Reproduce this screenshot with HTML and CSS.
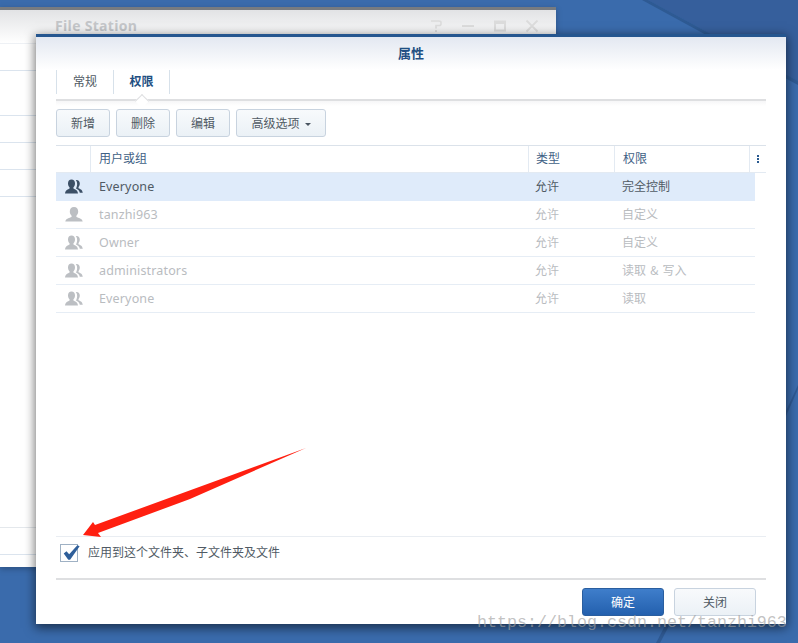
FILE: index.html
```html
<!DOCTYPE html>
<html lang="zh">
<head>
<meta charset="utf-8">
<title>属性</title>
<link rel="stylesheet" href="styles.css">
</head>
<body>
<div class="desktop">
  <svg class="wallpaper" width="798" height="643" viewBox="0 0 798 643">
    <path d="M648 0 L798 81 L798 0Z" fill="#365f9c"/>
    <path d="M642 0 L798 85 L798 81 L648 0Z" fill="#2e5a93"/>
    <path d="M786 411 L798 385 L798 389 L786 416Z" fill="#2f5a94"/>
    <path d="M656 643 L667 622 L671 622 L660 643Z" fill="#2f5a94"/>
  </svg>

  <section class="window back">
    <header class="back-head">
      <span class="back-title">File Station</span>
      <span class="back-tools">
        <svg width="14" height="14" viewBox="0 0 14 14"><path d="M2 2 H10 Q12 2 12 3.5 V5 Q12 6.5 10 6.5 H7 V9.5" fill="none" stroke="#dcdcdc" stroke-width="1.6"/><rect x="6" y="11" width="2" height="2" fill="#dcdcdc"/></svg>
        <svg width="14" height="14" viewBox="0 0 14 14"><rect x="1" y="6" width="12" height="2" fill="#dcdcdc"/></svg>
        <svg width="14" height="14" viewBox="0 0 14 14"><path d="M1 1.5h12v11h-12z M3 5v5.5h8V5z" fill="#dcdcdc" fill-rule="evenodd"/></svg>
        <svg width="14" height="14" viewBox="0 0 14 14"><path d="M1.5 1.5 L12.5 12.5 M12.5 1.5 L1.5 12.5" stroke="#dcdcdc" stroke-width="1.8"/></svg>
      </span>
    </header>
    <div class="back-row r1"></div>
    <div class="back-row r2"></div>
    <div class="back-row r3"></div>
    <div class="back-row r4"></div>
    <div class="back-row r5"></div>
    <div class="back-spacer"></div>
    <div class="back-row r6"></div>
  </section>

  <section class="window dialog">
    <header class="dialog-head">属性</header>
    <nav class="tabs">
      <span class="tab">常规</span>
      <span class="tab active">权限</span>
    </nav>
    <div class="toolbar">
      <button class="btn w54">新增</button>
      <button class="btn w54">删除</button>
      <button class="btn w54">编辑</button>
      <button class="btn w90">高级选项<i class="caret"></i></button>
    </div>
    <div class="grid-head">
      <span class="col-icon"></span>
      <span class="col-name">用户或组</span>
      <span class="col-type">类型</span>
      <span class="col-perm">权限</span>
      <span class="col-more"><i></i><i></i><i></i></span>
    </div>
    <div class="grid-body">
      <div class="row selected">
        <span class="col-icon"><svg class="ico" width="18" height="15" viewBox="0 0 18 15"><use href="#group"/></svg></span>
        <span class="col-name">Everyone</span><span class="col-type">允许</span><span class="col-perm">完全控制</span>
      </div>
      <div class="row muted">
        <span class="col-icon"><svg class="ico" width="18" height="15" viewBox="0 0 18 15"><use href="#user"/></svg></span>
        <span class="col-name">tanzhi963</span><span class="col-type">允许</span><span class="col-perm">自定义</span>
      </div>
      <div class="row muted">
        <span class="col-icon"><svg class="ico" width="18" height="15" viewBox="0 0 18 15"><use href="#group"/></svg></span>
        <span class="col-name">Owner</span><span class="col-type">允许</span><span class="col-perm">自定义</span>
      </div>
      <div class="row muted">
        <span class="col-icon"><svg class="ico" width="18" height="15" viewBox="0 0 18 15"><use href="#group"/></svg></span>
        <span class="col-name">administrators</span><span class="col-type">允许</span><span class="col-perm wide">读取 &amp; 写入</span>
      </div>
      <div class="row muted">
        <span class="col-icon"><svg class="ico" width="18" height="15" viewBox="0 0 18 15"><use href="#group"/></svg></span>
        <span class="col-name">Everyone</span><span class="col-type">允许</span><span class="col-perm">读取</span>
      </div>
    </div>
    <label class="apply">
      <span class="check">
        <svg width="20" height="17" viewBox="0 0 22 18"><path d="M3 10 L6 7.5 L9 11 L18 1 L20.5 2 L10 17 L8 17Z" fill="#2f5f9a"/></svg>
      </span>
      应用到这个文件夹、子文件夹及文件
    </label>
    <footer class="dialog-foot">
      <button class="btn primary">确定</button>
      <button class="btn plain">关闭</button>
    </footer>
  </section>

  <svg class="arrow" width="240" height="100" viewBox="0 0 240 100">
    <path d="M3 95 L13 82 L15 85 L226 8 L110 59 L18 93 L21 97Z" fill="#ff1f10"/>
  </svg>
  <div class="watermark">https://blog.csdn.net/tanzhi963</div>

  <svg class="defs" width="0" height="0">
    <defs>
      <g id="user">
        <path d="M9 0 C6.2 0 4.8 2 4.8 4.6 C4.8 6.6 5.8 8 6.6 8.8 L6.6 10 C4.6 11 0.8 11.3 0.3 14.5 L17.7 14.5 C17.2 11.3 13.4 11 11.4 10 L11.4 8.8 C12.2 8 13.2 6.6 13.2 4.6 C13.2 2 11.8 0 9 0Z"/>
      </g>
      <g id="group">
        <path d="M11.5 1 C13.6 1 14.8 2.5 14.8 4.6 C14.8 6.2 14 7.5 13.5 8.2 L13.5 9.2 C15 10 17.3 10.4 17.8 13.8 L14.8 13.8 C14.4 11.5 12.8 10.3 11 9.5 C11.8 8 12.5 6 12 3.6 C11.8 2.6 11.4 1.8 10.8 1.1Z"/>
        <path d="M6.5 0.5 C4.3 0.5 3 2.2 3 4.4 C3 6.3 3.9 7.6 4.6 8.4 L4.6 9.6 C3 10.5 0.5 10.9 0 14.5 L13 14.5 C12.6 10.9 10 10.5 8.4 9.6 L8.4 8.4 C9.1 7.6 10 6.3 10 4.4 C10 2.2 8.7 0.5 6.5 0.5Z"/>
      </g>
    </defs>
  </svg>
</div>
</body>
</html>
```

FILE: styles.css
```css
* { box-sizing: border-box; }
html, body { margin: 0; padding: 0; }
body {
  width: 798px;
  height: 643px;
  overflow: hidden;
  font-family: "Noto Sans", "Noto Sans CJK SC", sans-serif;
  font-size: 12px;
}
.desktop {
  position: relative;
  width: 798px;
  height: 643px;
  background: #3a6bac;
  overflow: hidden;
}
.wallpaper { position: absolute; left: 0; top: 0; }
.defs { position: absolute; }

.window { position: absolute; background: #fff; }

/* background File Station window */
.back {
  left: 0;
  top: 7px;
  width: 556px;
  height: 560px;
  border-top: 3px solid #777b80;
  box-shadow: 0 2px 6px rgba(0, 0, 0, .25);
}
.back-head {
  height: 34px;
  display: flex;
  justify-content: space-between;
  align-items: center;
  padding: 0 17px 2px 55px;
  background: linear-gradient(#e2e3e5, #ffffff);
  border-bottom: 1px solid #eef1f5;
}
.back-title {
  font: bold 14px "Open Sans", sans-serif;
  color: #c4c6c9;
  letter-spacing: .3px;
}
.back-tools { display: flex; gap: 18px; }
.back-row { border-bottom: 1px solid #dbe4ee; }
.r1 { height: 27px; }
.r2 { height: 45px; }
.r3, .r4, .r5 { height: 27px; }
.back-spacer { height: 331px; border-bottom: 1px solid #e4e8ec; }
.r6 { height: 27px; }

/* dialog */
.dialog {
  left: 36px;
  top: 34px;
  width: 750px;
  height: 590px;
  padding: 0 20px;
  border-top: 3px solid #25568f;
  box-shadow: 0 3px 10px 1px rgba(0, 0, 0, .55);
  display: flex;
  flex-direction: column;
}
.dialog-head {
  margin: 0 -20px;
  height: 33px;
  line-height: 33px;
  text-align: center;
  font-size: 13px;
  font-weight: 700;
  color: #1f4f82;
  background: linear-gradient(#e3e8f1, #ffffff);
}
.tabs {
  display: flex;
  height: 31px;
  border-bottom: 2px solid #dedfe1;
  align-items: flex-start;
}
.tab {
  width: 57px;
  height: 24px;
  line-height: 24px;
  text-align: center;
  color: #505a64;
  border-left: 1px solid #d7e1ea;
  position: relative;
}
.tab.active {
  color: #1f4f82;
  font-weight: 700;
  width: 57px;
  border-right: 1px solid #d7e1ea;
}
.tab.active::after {
  content: "";
  position: absolute;
  left: 23px;
  top: 26px;
  width: 9px;
  height: 9px;
  background: #fff;
  border-left: 1px solid #dedfe1;
  border-top: 1px solid #dedfe1;
  transform: rotate(45deg);
}
.toolbar {
  display: flex;
  gap: 6px;
  padding-top: 8px;
  height: 44px;
  align-items: flex-start;
  background: linear-gradient(#f6f6f7, #ffffff 5px);
}
.btn {
  height: 28px;
  padding: 0 0 2px;
  border: 1px solid #c8d3df;
  border-radius: 3px;
  background: linear-gradient(#f8fafc, #ebf1f6);
  color: #505a64;
  font: 12px "Noto Sans CJK SC", "Noto Sans", sans-serif;
}
.w54 { width: 54px; }
.w90 { width: 90px; }
.caret {
  display: inline-block;
  margin-left: 5px;
  vertical-align: 2px;
  border-left: 3px solid transparent;
  border-right: 3px solid transparent;
  border-top: 3px solid #4a5560;
}

/* grid */
.grid-head {
  display: flex;
  height: 28px;
  border-top: 1px solid #dbe2ea;
  border-bottom: 1px solid #e3eaf2;
  color: #3f6185;
  font-family: "Noto Sans CJK SC", sans-serif;
}
.grid-head > span {
  display: flex;
  align-items: center;
  padding: 0 0 3px 8px;
  border-right: 1px solid #e3eaf2;
}
.grid-head .col-icon { width: 35px; padding: 0; }
.grid-head .col-name { width: 438px; }
.grid-head .col-type { width: 86px; padding-left: 7px; }
.grid-head .col-perm { width: 135px; }
.grid-head .col-more {
  flex: 1;
  border-right: 0;
  flex-direction: column;
  justify-content: center;
  align-items: flex-start;
  gap: 1px;
  padding: 0 0 0 7px;
}
.col-more i { width: 2px; height: 2px; background: #2a5a90; }

.grid-body { width: 699px; flex: 1; }
.row {
  display: flex;
  align-items: center;
  height: 28px;
  border-bottom: 1px solid #e6edf5;
  color: #505a64;
}
.row.selected { background: #dfebfa; border-bottom-color: #dfebfa; }
.row.muted { color: #b9bcbf; }
.row .col-icon { width: 35px; padding-left: 9px; display: flex; align-items: center; }
.row .col-name { width: 438px; padding-left: 8px; font-size: 12.5px; letter-spacing: .15px; }
.row .col-type,
.row .col-perm {
  padding: 0 0 2px 6px;
  font-family: "Noto Sans CJK SC", sans-serif;
  font-size: 12px;
}
.row .col-type { width: 87px; }
.row .col-perm { flex: 1; }
.row .wide { word-spacing: 1.5px; }
.ico { fill: #bcbfc3; }
.selected .ico { fill: #3b4f66; }

.apply {
  display: flex;
  align-items: center;
  gap: 10px;
  height: 44px;
  padding: 0 0 12px 4px;
  border-top: 1px solid #e9edf2;
  border-bottom: 2px solid #dedfe1;
  color: #505a64;
  font-family: "Noto Sans CJK SC", sans-serif;
}
.check {
  position: relative;
  width: 18px;
  height: 18px;
  margin-top: 2px;
  border: 1px solid #9fb1c4;
  background: #fff;
}
.check svg { position: absolute; left: 0; top: -1px; }

.dialog-foot {
  height: 44px;
  display: flex;
  justify-content: flex-end;
  align-items: flex-start;
  gap: 10px;
  padding: 8px 10px 0 0;
}
.dialog-foot .btn { width: 82px; }
.btn.primary {
  border-color: #2a5e9f;
  background: linear-gradient(#3f7ecb, #2360ae);
  color: #fff;
}

.arrow { position: absolute; left: 80px; top: 440px; }
.watermark {
  position: absolute;
  left: 477px;
  top: 613px;
  font: 16.67px "Liberation Mono", monospace;
  color: rgba(160, 160, 160, .65);
  white-space: nowrap;
}
```
